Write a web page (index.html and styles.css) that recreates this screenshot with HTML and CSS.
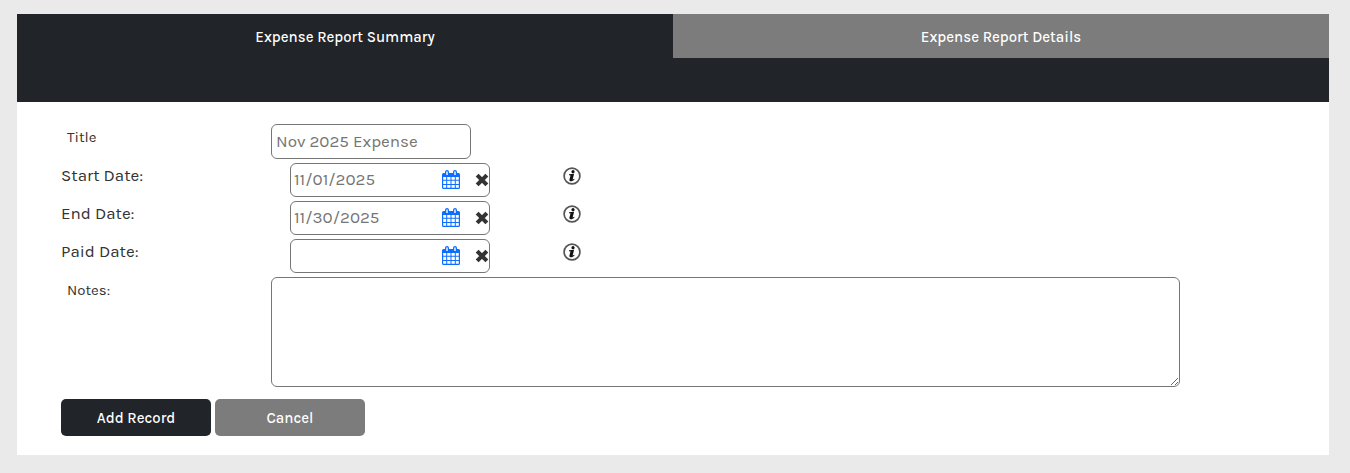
FILE: index.html
```html
<!DOCTYPE html>
<html lang="en">
<head>
  <meta charset="UTF-8">
  <meta name="viewport" content="width=device-width, initial-scale=1">
  <title>Expense Report</title>
  <link rel="stylesheet" href="styles.css">
</head>
<body>
  <!-- Shared icons -->
  <svg class="icon-defs" aria-hidden="true">
    <symbol id="calendar" viewBox="0 0 18 19">
      <path fill="#0d6efd" d="M1.500 3H3V2a2 2 0 0 1 4 0v1h4V2a2 2 0 0 1 4 0v1h1.500A1.500 1.500 0 0 1 18 4.500V17.500a1.500 1.500 0 0 1-1.500 1.500h-15A1.500 1.500 0 0 1 0 17.500V4.500A1.500 1.500 0 0 1 1.500 3z"/>
      <path fill="#fff" d="M4.300 1.500h1.400v3.500H4.300zM12.300 1.500h1.400v3.500h-1.400zM1.200 7h3v2.800h-3zM5.200 7h3.300v2.800H5.200zM9.500 7h3.300v2.800H9.500zM13.800 7h3v2.800h-3zM1.200 10.800h3v3.200h-3zM5.200 10.800h3.300V14H5.200zM9.500 10.800h3.300V14H9.500zM13.800 10.800h3V14h-3zM1.200 15h3v2.800h-3zM5.200 15h3.300v2.800H5.200zM9.500 15h3.300v2.800H9.500zM13.800 15h3v2.800h-3z"/>
    </symbol>
    <symbol id="clear" viewBox="0 0 13 13">
      <path d="M2 2l9 9M11 2l-9 9" stroke="#333" stroke-width="3.800"/>
    </symbol>
    <symbol id="info" viewBox="0 0 18 18">
      <circle cx="9" cy="9" r="7.900" fill="#fff" stroke="#555" stroke-width="1.700"/>
      <circle cx="10" cy="4.700" r="1.600" fill="#111"/>
      <path fill="#111" d="M6 7.300l5.100-.5-1.400 5.400c-.1.600.3.500 1.500-.4l.4.500c-1.400 1.700-2.900 2.200-4 2-1.200-.1-1.400-1-1.100-2l.9-3.400c.1-.6-.3-.7-1.400-.7z"/>
    </symbol>
  </svg>

  <main class="page">
    <nav class="tabs">
      <a class="tab active" href="#summary">Expense Report Summary</a>
      <a class="tab" href="#details">Expense Report Details</a>
    </nav>

    <form class="report-form" id="summary">
      <div class="row">
        <label class="small-label" for="title">Title</label>
        <input class="text-box" type="text" id="title" value="Nov 2025 Expense">
      </div>

      <!-- Dates -->
      <div class="row date-row">
        <label for="startDate">Start Date:</label>
        <div class="date-field">
          <input type="text" id="startDate" value="11/01/2025">
          <button type="button" aria-label="Pick start date"><svg class="calendar-icon"><use href="#calendar"/></svg></button>
          <button type="button" aria-label="Clear start date"><svg class="clear-icon"><use href="#clear"/></svg></button>
        </div>
        <button type="button" class="info" aria-label="About start date"><svg class="info-icon"><use href="#info"/></svg></button>
      </div>
      <div class="row date-row">
        <label for="endDate">End Date:</label>
        <div class="date-field">
          <input type="text" id="endDate" value="11/30/2025">
          <button type="button" aria-label="Pick end date"><svg class="calendar-icon"><use href="#calendar"/></svg></button>
          <button type="button" aria-label="Clear end date"><svg class="clear-icon"><use href="#clear"/></svg></button>
        </div>
        <button type="button" class="info" aria-label="About end date"><svg class="info-icon"><use href="#info"/></svg></button>
      </div>
      <div class="row date-row">
        <label for="paidDate">Paid Date:</label>
        <div class="date-field">
          <input type="text" id="paidDate">
          <button type="button" aria-label="Pick paid date"><svg class="calendar-icon"><use href="#calendar"/></svg></button>
          <button type="button" aria-label="Clear paid date"><svg class="clear-icon"><use href="#clear"/></svg></button>
        </div>
        <button type="button" class="info" aria-label="About paid date"><svg class="info-icon"><use href="#info"/></svg></button>
      </div>

      <div class="row notes-row">
        <label class="small-label" for="notes">Notes:</label>
        <textarea id="notes"></textarea>
      </div>

      <div class="actions">
        <button type="submit" class="btn btn-dark">Add Record</button>
        <button type="button" class="btn">Cancel</button>
      </div>
    </form>
  </main>
</body>
</html>
```
FILE: styles.css
```css
* {
  box-sizing: border-box;
}

body {
  margin: 0;
  padding: 14px 21px 18px 17px;
  background-color: #eaeaea;
  color: #333;
  font-family: Karla, Inter, sans-serif;
  font-size: 17px;
  line-height: 24px;
}

input, textarea, button {
  font: inherit;
}

button {
  padding: 0;
  border: 0;
  background: none;
  cursor: pointer;
}

svg {
  display: block;
}

.icon-defs {
  display: none;
}

.page {
  background-color: #fff;
}

.tabs {
  display: flex;
  padding-bottom: 44px;
  background-color: #212529;
}

.tab {
  flex: 1;
  padding: 11px 10px 9px;
  background-color: #7c7c7c;
  color: #fff;
  font-size: 15px;
  font-weight: 500;
  text-align: center;
  text-decoration: none;
}

.tab.active {
  background-color: #212529;
}

.report-form {
  padding: 22px 44px 19px;
}

.row {
  display: flex;
  align-items: flex-start;
  margin-bottom: 4px;
}

.row label {
  flex: 0 0 210px;
}

.row .small-label {
  padding: 1px 6px;
  font-size: 15px;
}

.text-box, .date-field, textarea {
  border: 1px solid #767676;
  border-radius: 6px;
  background-color: #fff;
  color: #757575;
}

.text-box {
  width: 200px;
  height: 35px;
  padding: 0 4px 2px;
}

.date-row label {
  flex-basis: 229px;
}

.date-field {
  display: flex;
  align-items: center;
  width: 200px;
  height: 34px;
}

.date-field input {
  flex: 1;
  min-width: 0;
  padding: 0 3px 2px;
  border: 0;
  background: none;
  color: inherit;
}

.calendar-icon {
  width: 18px;
  height: 19px;
  margin: 0 15px 2px 0;
}

.clear-icon {
  width: 14px;
  height: 14px;
}

.info {
  margin: 4px 0 0 73px;
}

.info-icon {
  width: 18px;
  height: 18px;
}

.notes-row {
  margin-bottom: 12px;
  padding-right: 105px;
}

textarea {
  flex: 1;
  height: 110px;
  padding: 4px;
}

.actions {
  display: flex;
  gap: 4px;
}

.btn {
  width: 150px;
  height: 37px;
  border-radius: 5px;
  background-color: #7c7c7c;
  color: #fff;
  font-size: 15px;
  font-weight: 500;
}

.btn-dark {
  background-color: #212529;
}
```
